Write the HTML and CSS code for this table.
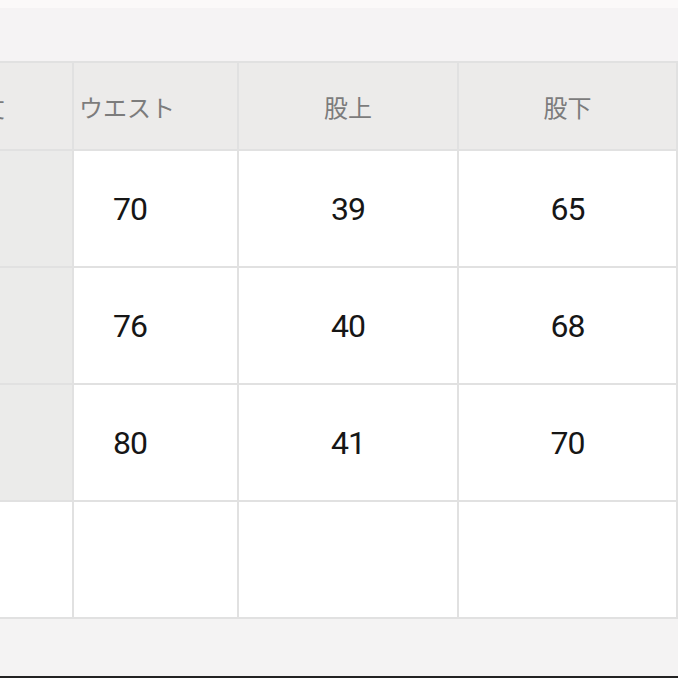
FILE: index.html
```html
<!DOCTYPE html>
<html lang="ja">
<head>
<meta charset="utf-8">
<link rel="stylesheet" href="styles.css">
</head>
<body>
<div class="page">
  <div class="topstrip"></div>
  <div class="band"></div>
  <div class="table">
    <div class="cell head first">着丈</div>
    <div class="cell head waist">ウエスト</div>
    <div class="cell head">股上</div>
    <div class="cell head">股下</div>

    <div class="cell label"></div>
    <div class="cell num waist">70</div>
    <div class="cell num">39</div>
    <div class="cell num">65</div>

    <div class="cell label"></div>
    <div class="cell num waist">76</div>
    <div class="cell num">40</div>
    <div class="cell num">68</div>

    <div class="cell label"></div>
    <div class="cell num waist">80</div>
    <div class="cell num">41</div>
    <div class="cell num">70</div>

    <div class="cell blank"></div>
    <div class="cell blank"></div>
    <div class="cell blank"></div>
    <div class="cell blank"></div>
  </div>
  <div class="footer"></div>
  <div class="edge"></div>
</div>
</body>
</html>
```

FILE: styles.css
```css
html, body {
  margin: 0;
  padding: 0;
  background: #f4f3f3;
  overflow: hidden;
}
.page {
  width: 678px;
  height: 678px;
  display: flex;
  flex-direction: column;
  overflow: hidden;
}
.topstrip {
  height: 8px;
  background: #fbf9f9;
}
.band {
  height: 53px;
  background: #f5f3f4;
}
.table {
  margin-left: -80px;
  width: 758px;
  box-sizing: border-box;
  display: grid;
  grid-template-columns: 152px 163px 218px 217px;
  grid-template-rows: 86px 115px 115px 115px 115px;
  gap: 2px;
  padding: 2px 2px 2px 0;
  background: #e1e1e1;
}
.cell {
  display: flex;
  align-items: center;
  justify-content: center;
  background: #ffffff;
}
.head {
  background: #ecebea;
  color: #7c7c7c;
  font-family: "Noto Sans CJK JP", "Noto Sans", sans-serif;
  font-size: 24px;
}
.head.first {
  justify-content: flex-end;
  padding-right: 67px;
}
.head.waist {
  justify-content: flex-start;
  padding-left: 5px;
}
.label {
  background: #ebebea;
}
.num {
  color: #161616;
  font-family: Roboto, "Liberation Sans", sans-serif;
  font-size: 32px;
  font-weight: 400;
  letter-spacing: -1px;
}
.num.waist {
  justify-content: flex-start;
  padding-left: 39px;
}
.blank {
  background: #ffffff;
}
.footer {
  flex: 1;
  background: #f4f3f3;
}
.edge {
  height: 2px;
  background: #222222;
}
```
